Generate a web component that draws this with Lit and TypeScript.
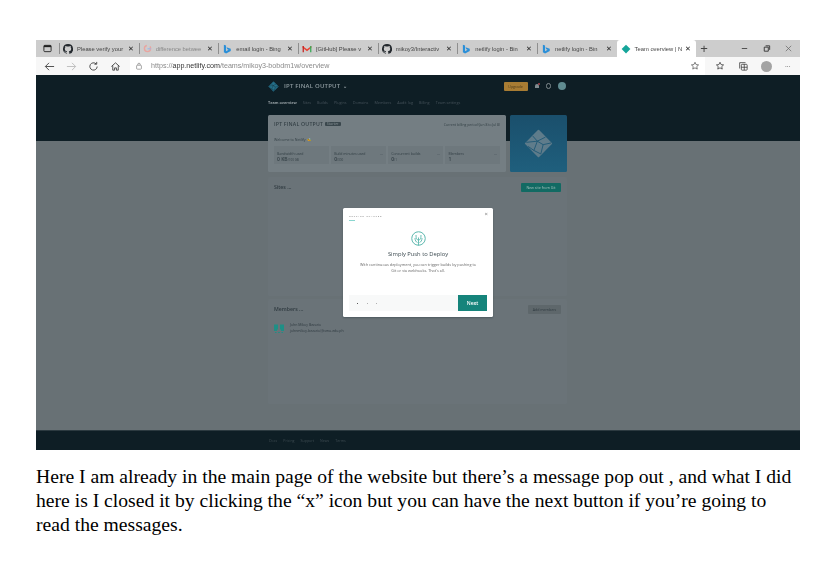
import { LitElement, html, css, svg } from 'lit';
import { customElement } from 'lit/decorators.js';

const githubIcon = html`<svg viewBox="0 0 16 16" width="10" height="10"><path fill="#24292e" d="M8 0a8 8 0 0 0-2.5 15.6c.4.1.5-.2.5-.4v-1.4c-2.2.5-2.7-1-2.7-1-.4-.9-.9-1.2-.9-1.2-.7-.5.1-.5.1-.5.8.1 1.2.8 1.2.8.7 1.2 1.9.9 2.3.7.1-.5.3-.9.5-1.1-1.8-.2-3.6-.9-3.6-4 0-.9.3-1.6.8-2.1-.1-.2-.4-1 .1-2.1 0 0 .7-.2 2.2.8a7.6 7.6 0 0 1 4 0c1.5-1 2.2-.8 2.2-.8.4 1.1.2 1.9.1 2.1.5.6.8 1.3.8 2.1 0 3.1-1.9 3.8-3.7 4 .3.3.6.8.6 1.5v2.2c0 .2.1.5.6.4A8 8 0 0 0 8 0z"/></svg>`;
const googleIcon = html`<svg viewBox="0 0 16 16" width="9" height="9"><circle cx="8" cy="8" r="5.5" fill="none" stroke="#e9a5a0" stroke-width="2.5" stroke-dasharray="24 6"/><path d="M8 7.5h6v2H8z" fill="#9db8e8"/></svg>`;
const bingIcon = html`<svg viewBox="0 0 16 16" width="10" height="10"><path fill="#2a8fd8" d="M3 1l3.5 1.2v9.3l4-2.3-2-1L7.2 5l6.8 2.4v3.6L6.5 15 3 13z"/></svg>`;
const gmailIcon = html`<svg viewBox="0 0 16 16" width="10" height="10"><path fill="#ea4335" d="M1 3l7 5.5L15 3v3L8 11.5 1 6z"/><path fill="#c5221f" d="M1 3h2v10H1z"/><path fill="#34a853" d="M13 3h2v10h-2z"/></svg>`;
const netlifyTab = html`<svg viewBox="0 0 16 16" width="10" height="10"><path fill="#15a59a" d="M8 1l7 7-7 7-7-7z"/></svg>`;

const tabs = [
  { icon: githubIcon, title: 'Please verify your' },
  { icon: googleIcon, title: 'difference betwee', dim: true },
  { icon: bingIcon, title: 'email login - Bing' },
  { icon: gmailIcon, title: '[GitHub] Please v' },
  { icon: githubIcon, title: 'mikoy3/Interactiv' },
  { icon: bingIcon, title: 'netlify login - Bin' },
  { icon: bingIcon, title: 'netlify login - Bin' },
  { icon: netlifyTab, title: 'Team overview | N', active: true },
];

const navItems = ['Sites', 'Builds', 'Plugins', 'Domains', 'Members', 'Audit log', 'Billing', 'Team settings'];
const usage = [
  { label: 'Bandwidth used', value: '0 KB', unit: '/100 GB', more: false },
  { label: 'Build minutes used', value: '0', unit: '/300', more: true },
  { label: 'Concurrent builds', value: '0', unit: '/1', more: true },
  { label: 'Members', value: '1', unit: '', more: true },
];
const footerLinks = ['Docs', 'Pricing', 'Support', 'News', 'Terms'];

const netlifyMark = svg`<path fill="currentColor" stroke="currentColor" stroke-width="6" stroke-linejoin="round" d="M50 6 94 50 50 94 6 50z"/>
  <path fill="none" stroke="var(--cut)" stroke-width="3" d="M30 24 46 42 34 74M46 42 74 28M46 42 66 54 58 86M66 54 94 48M34 74 14 60M46 42 8 46M34 74 58 86"/>`;

@customElement('app-root')
export class AppRoot extends LitElement {
  static styles = css`
    :host {
      display: block;
      width: 827px;
      height: 575px;
      background: #fff;
      overflow: hidden;
    }
    .page {
      padding: 40px 27px 0 36px;
    }
    .shot {
      position: relative;
      height: 410px;
      display: flex;
      flex-direction: column;
      overflow: hidden;
      font-family: 'Open Sans', 'Liberation Sans', sans-serif;
    }
    .tabbar,
    .addressbar,
    .container,
    .footer,
    .modal {
      filter: blur(0.4px);
    }
    .tabbar {
      height: 17px;
      flex: none;
      display: flex;
      align-items: center;
      background: #cdcdcd;
      color: #444;
      font-family: 'Liberation Sans', Arial, sans-serif;
    }
    .tabbar-icon {
      width: 23px;
      flex: none;
      display: flex;
      justify-content: center;
    }
    .tab {
      width: 79.67px;
      height: 17px;
      box-sizing: border-box;
      flex: none;
      display: flex;
      align-items: center;
      gap: 4px;
      padding: 0 5px 0 4px;
      position: relative;
      font-size: 5.8px;
      white-space: nowrap;
    }
    .tab::before {
      content: '';
      position: absolute;
      left: 0;
      top: 3px;
      bottom: 3px;
      width: 1px;
      background: #8e8e8e;
    }
    .tab.active {
      background: #fff;
      border-radius: 3px 3px 0 0;
    }
    .tab.active::before {
      display: none;
    }
    .tab.dim {
      color: #888;
    }
    .tab svg {
      flex: none;
    }
    .tab-title {
      flex: 1;
      min-width: 0;
    }
    .tab-close {
      color: #222;
      font-size: 7px;
      line-height: 1;
    }
    .plus {
      margin-left: 4px;
      font-size: 13px;
      line-height: 1;
      color: #444;
    }
    .window-controls {
      margin-left: auto;
      display: flex;
      gap: 13px;
      padding-right: 7px;
    }
    .window-controls svg {
      display: block;
    }
    .addressbar {
      height: 18px;
      flex: none;
      display: flex;
      align-items: center;
      background: #f7f7f7;
      color: #555;
    }
    .addressbar svg {
      flex: none;
    }
    .nav-buttons {
      display: flex;
      gap: 11px;
      padding: 0 9.5px 0 7.5px;
    }
    .url-box {
      width: 575px;
      height: 18px;
      box-sizing: border-box;
      display: flex;
      align-items: center;
      gap: 8px;
      padding: 0 5px;
      background: #fff;
      font-family: 'Liberation Sans', Arial, sans-serif;
      font-size: 7.15px;
      color: #8a8a8a;
    }
    .url-box b {
      font-weight: 400;
      color: #333;
    }
    .url-box svg:last-child {
      margin-left: auto;
    }
    .toolbar {
      display: flex;
      align-items: center;
      gap: 13px;
      padding-left: 10px;
    }
    .avatar-browser {
      width: 11px;
      height: 11px;
      border-radius: 50%;
      background: #a3a3a3;
    }
    .more {
      font-size: 7px;
      line-height: 1;
    }
    .site {
      flex: 1;
      min-height: 0;
      display: flex;
      flex-direction: column;
      background: linear-gradient(#0e1e25 66px, #687175 66px);
    }
    .container {
      width: 299px;
      margin-left: 232px;
      flex: 1;
    }
    .topline {
      height: 22px;
      display: flex;
      align-items: center;
      padding-right: 1px;
      color: #8f9ba0;
      font-weight: 600;
      font-size: 6px;
      letter-spacing: 0.2px;
    }
    .logo {
      --cut: #0e1e25;
      width: 11px;
      height: 11px;
      margin-right: 5px;
      color: #24708a;
    }
    .caret {
      margin-left: 3px;
      font-size: 5px;
    }
    .top-actions {
      margin-left: auto;
      display: flex;
      align-items: center;
      gap: 7px;
    }
    .upgrade {
      width: 24px;
      height: 9px;
      display: flex;
      align-items: center;
      justify-content: center;
      background: #a87c33;
      color: #4a3a1a;
      border-radius: 1px;
      font-size: 3.6px;
      font-weight: 400;
      letter-spacing: 0;
    }
    .ring {
      width: 3.5px;
      height: 3.5px;
      border: 1px solid #808b8f;
      border-radius: 50%;
    }
    .bell {
      width: 4px;
      height: 4px;
      background: #808b8f;
      border-radius: 2px 2px 0 0;
      position: relative;
    }
    .bell::after {
      content: '';
      position: absolute;
      top: -1.5px;
      right: -1px;
      width: 2px;
      height: 2px;
      border-radius: 50%;
      background: #a8434b;
    }
    .team-avatar {
      width: 8px;
      height: 8px;
      border-radius: 50%;
      background: #5f8b90;
    }
    .tabsnav {
      height: 11px;
      display: flex;
      align-items: center;
      gap: 6px;
      font-size: 3.8px;
      color: #46525a;
    }
    .tabsnav .current {
      color: #97a1a5;
      font-weight: 700;
    }
    .team-row {
      margin-top: 7px;
      display: flex;
      gap: 4px;
    }
    .team-card {
      width: 238px;
      height: 57px;
      box-sizing: border-box;
      padding: 5px 6px;
      background: #747e83;
      border-radius: 1.5px;
      color: #333f45;
    }
    .team-head {
      display: flex;
      align-items: center;
      gap: 2px;
      font-size: 5.2px;
      font-weight: 600;
      letter-spacing: 0.2px;
    }
    .badge {
      padding: 0 2px;
      background: #3a474d;
      color: #808b8f;
      border-radius: 1px;
      font-size: 3px;
      line-height: 4px;
    }
    .billing {
      margin-left: auto;
      font-weight: 400;
      font-size: 3.4px;
      letter-spacing: 0;
    }
    .welcome {
      margin-top: 9px;
      font-size: 3.6px;
      line-height: 5px;
    }
    .usage {
      margin-top: 4px;
      display: grid;
      grid-template-columns: repeat(4, 1fr);
      gap: 2.5px;
    }
    .usage-item {
      height: 18px;
      box-sizing: border-box;
      padding: 4.5px 3px 0;
      background: #6e787d;
      font-size: 3.5px;
      line-height: 5px;
    }
    .usage-label {
      display: flex;
      justify-content: space-between;
    }
    .usage-value {
      margin-top: 0.5px;
      font-size: 5px;
      line-height: 6px;
      font-weight: 600;
    }
    .usage-value small {
      font-size: 3px;
      font-weight: 400;
    }
    .hero-mark {
      --cut: #1c5674;
      flex: 1;
      height: 57px;
      display: flex;
      align-items: center;
      justify-content: center;
      background: linear-gradient(#1a4f6c, #1f5f7d);
      border-radius: 1.5px;
      color: #5f7c8b;
    }
    .hero-mark svg {
      width: 29px;
      height: 29px;
    }
    .panel {
      margin-top: 5px;
      box-sizing: border-box;
      padding: 6px;
      background: #6a7378;
      border-radius: 1.5px;
      color: #2f3a40;
    }
    .panel.sites {
      height: 119px;
    }
    .panel.members {
      margin-top: 3px;
      height: 105px;
    }
    .panel-head {
      display: flex;
      align-items: center;
      justify-content: space-between;
      font-size: 5.2px;
      font-weight: 600;
      height: 8px;
    }
    .btn {
      height: 9px;
      display: flex;
      align-items: center;
      justify-content: center;
      border-radius: 1px;
      font-size: 3.6px;
      font-weight: 400;
    }
    .btn.primary {
      width: 40px;
      background: #126a63;
      color: #a8c4bf;
    }
    .btn.subtle {
      width: 33px;
      background: #5e676b;
    }
    .member {
      margin-top: 9px;
      display: flex;
      align-items: center;
      gap: 6px;
      font-size: 3.5px;
      line-height: 6px;
    }
    .member svg {
      width: 10px;
      height: 10px;
      flex: none;
    }
    .footer {
      height: 20px;
      flex: none;
      display: flex;
      align-items: center;
      gap: 6px;
      padding-left: 233px;
      background: #0e1e25;
      border-top: 1px solid #2c3a40;
      box-sizing: border-box;
      font-size: 3.6px;
      color: #3f4c52;
    }
    .modal {
      position: absolute;
      top: 168px;
      left: 307px;
      width: 150px;
      height: 109px;
      box-sizing: border-box;
      display: flex;
      flex-direction: column;
      padding: 7px 6px 6px;
      background: #fff;
      border-radius: 1.5px;
      box-shadow: 0 1px 2px rgba(14, 30, 37, 0.3);
      color: #3c4a50;
    }
    .modal-close {
      position: absolute;
      top: 3px;
      right: 5px;
      font-size: 6px;
      line-height: 1;
      color: #777;
    }
    .eyebrow {
      font-size: 2.5px;
      letter-spacing: 0.8px;
      line-height: 3px;
      color: #777;
    }
    .eyebrow-bar {
      margin-top: 1.5px;
      width: 6px;
      height: 1px;
      background: #8ad6cf;
    }
    .modal-icon {
      margin: 10px auto 0;
      width: 15px;
      height: 15px;
      display: block;
    }
    .modal-title {
      margin-top: 4px;
      text-align: center;
      font-size: 5.8px;
      line-height: 8px;
    }
    .modal-text {
      margin-top: 4px;
      text-align: center;
      font-size: 3.8px;
      line-height: 6px;
      color: #666;
    }
    .modal-foot {
      margin-top: auto;
      height: 16px;
      display: flex;
      align-items: stretch;
      justify-content: space-between;
      background: #f8f9f9;
    }
    .dots {
      display: flex;
      align-items: center;
      gap: 8.5px;
      padding-left: 8px;
    }
    .dots span {
      width: 1px;
      height: 1px;
      border-radius: 50%;
      background: #999;
    }
    .dots span:first-child {
      background: #222;
    }
    .next {
      width: 29px;
      display: flex;
      align-items: center;
      justify-content: center;
      background: #15847b;
      color: #fff;
      font-size: 5px;
      font-weight: 600;
    }
    .caption {
      margin: 14px 0 0;
      font-family: 'Liberation Serif', 'Times New Roman', serif;
      font-size: 19.64px;
      line-height: 24px;
      color: #000;
    }
  `;

  render() {
    return html`<div class="page">
      <div class="shot">
        <div class="tabbar">
          <div class="tabbar-icon">
            <svg viewBox="0 0 10 10" width="9" height="9"><rect x="1" y="1.5" width="8" height="7" rx="1" fill="none" stroke="#222" stroke-width="1"/><rect x="1" y="1.5" width="8" height="2" fill="#222"/></svg>
          </div>
          ${tabs.map(
            (t) => html`<div class="tab ${t.active ? 'active' : ''} ${t.dim ? 'dim' : ''}">
              ${t.icon}<span class="tab-title">${t.title}</span><span class="tab-close">✕</span>
            </div>`,
          )}
          <span class="plus">+</span>
          <div class="window-controls">
            <svg viewBox="0 0 10 10" width="9" height="9"><path d="M2 5h6" stroke="#444"/></svg>
            <svg viewBox="0 0 10 10" width="9" height="9"><path d="M2.5 3.5h4.5v4.5h-4.5zM4 2h4.5v4.5" fill="none" stroke="#333"/></svg>
            <svg viewBox="0 0 10 10" width="9" height="9"><path d="M2 2l6 6M8 2l-6 6" stroke="#666" stroke-width=".8"/></svg>
          </div>
        </div>
        <div class="addressbar">
          <div class="nav-buttons">
            <svg viewBox="0 0 12 12" width="11" height="11"><path d="M11 6H1.5M5.5 2l-4 4 4 4" fill="none" stroke="#444"/></svg>
            <svg viewBox="0 0 12 12" width="11" height="11"><path d="M1 6h9.5M6.5 2l4 4-4 4" fill="none" stroke="#bbb"/></svg>
            <svg viewBox="0 0 12 12" width="11" height="11"><path d="M10 6a4 4 0 1 1-1.2-2.9M9.5 1v2.5H7" fill="none" stroke="#444"/></svg>
            <svg viewBox="0 0 12 12" width="11" height="11"><path d="M1.5 6 6 2l4.5 4M3 5v5h2V7.5h2V10h2V5" fill="none" stroke="#444"/></svg>
          </div>
          <div class="url-box">
            <svg viewBox="0 0 10 10" width="8" height="8"><rect x="2" y="4" width="6" height="5" rx="1" fill="none" stroke="#777" stroke-width=".8"/><path d="M3.5 4V3a1.5 1.5 0 0 1 3 0v1" fill="none" stroke="#777" stroke-width=".8"/></svg>
            <span>https://<b>app.netlify.com</b>/teams/mikoy3-bobdm1w/overview</span>
            <svg viewBox="0 0 12 12" width="10" height="10"><path d="M6 1.5l1.3 2.8 3 .4-2.2 2 .6 3L6 8.2 3.3 9.7l.6-3-2.2-2 3-.4z" fill="none" stroke="#555" stroke-width=".9"/></svg>
          </div>
          <div class="toolbar">
            <svg viewBox="0 0 12 12" width="10" height="10"><path d="M6 1.5l1.3 2.8 3 .4-2.2 2 .6 3L6 8.2 3.3 9.7l.6-3-2.2-2 3-.4z" fill="none" stroke="#333" stroke-width=".9"/></svg>
            <svg viewBox="0 0 12 12" width="10" height="10"><rect x="4" y="4" width="7" height="7" rx="1" fill="none" stroke="#333" stroke-width=".9"/><path d="M2 9V2h7M4 7.5h7M7.5 4v7" fill="none" stroke="#333" stroke-width=".9"/></svg>
            <div class="avatar-browser"></div>
            <span class="more">···</span>
          </div>
        </div>
        <div class="site">
          <div class="container">
            <div class="topline">
              <svg class="logo" viewBox="0 0 100 100">${netlifyMark}</svg>
              <span>IPT FINAL OUTPUT</span><span class="caret">⌄</span>
              <div class="top-actions">
                <span class="upgrade">Upgrade</span>
                <span class="bell"></span>
                <span class="ring"></span>
                <span class="team-avatar"></span>
              </div>
            </div>
            <div class="tabsnav">
              <span class="current">Team overview</span>
              ${navItems.map((n) => html`<span>${n}</span>`)}
            </div>
            <div class="team-row">
              <div class="team-card">
                <div class="team-head">
                  <span>IPT FINAL OUTPUT</span><span class="badge">Starter</span>
                  <span class="billing">Current billing period (Jun 8 to Jul 8)</span>
                </div>
                <div class="welcome">Welcome to Netlify 🐝</div>
                <div class="usage">
                  ${usage.map(
                    (u) => html`<div class="usage-item">
                      <div class="usage-label"><span>${u.label}</span>${u.more ? html`<span>...</span>` : ''}</div>
                      <div class="usage-value">${u.value}<small>${u.unit}</small></div>
                    </div>`,
                  )}
                </div>
              </div>
              <div class="hero-mark"><svg viewBox="0 0 100 100">${netlifyMark}</svg></div>
            </div>
            <div class="panel sites">
              <div class="panel-head"><span>Sites ...</span><span class="btn primary">New site from Git</span></div>
            </div>
            <div class="panel members">
              <div class="panel-head"><span>Members ...</span><span class="btn subtle">Add members</span></div>
              <div class="member">
                <svg viewBox="0 0 10 10"><path fill="#1f8f86" d="M0 1.5h4v5H3V8H0zM6 1.5h4V8H7V6.5H6zM1 9h1.5v1H1zM4.2 9h1.6v1H4.2zM7.5 9H9v1H7.5z"/></svg>
                <div>John Mikoy Bezario<br />johnmikoy.bezario@ismu.edu.ph</div>
              </div>
            </div>
          </div>
          <div class="footer">${footerLinks.map((l) => html`<span>${l}</span>`)}</div>
        </div>
        <div class="modal">
          <span class="modal-close">×</span>
          <div class="eyebrow">GETTING STARTED</div>
          <div class="eyebrow-bar"></div>
          <svg class="modal-icon" viewBox="0 0 30 30">
            <circle cx="15" cy="15" r="13.5" fill="none" stroke="#5cb8ae" stroke-width="2" />
            <path d="M15 29V13M15 18c-4 0-5-3-5-10M15 18c4 0 5-3 5-10M8 14c0 5 2 8 5 9M22 14c0 5-2 8-5 9" fill="none" stroke="#5cb8ae" stroke-width="1.8" />
          </svg>
          <div class="modal-title">Simply Push to Deploy</div>
          <div class="modal-text">With continuous deployment, you can trigger builds by pushing to<br />Git or via webhooks. That's all.</div>
          <div class="modal-foot">
            <div class="dots"><span></span><span></span><span></span></div>
            <div class="next">Next</div>
          </div>
        </div>
      </div>
      <p class="caption">Here I am already in the main page of the website but there’s a message pop out , and what I did here is I closed it by clicking the “x” icon but you can have the next button if you’re going to read the messages.</p>
    </div>`;
  }
}
